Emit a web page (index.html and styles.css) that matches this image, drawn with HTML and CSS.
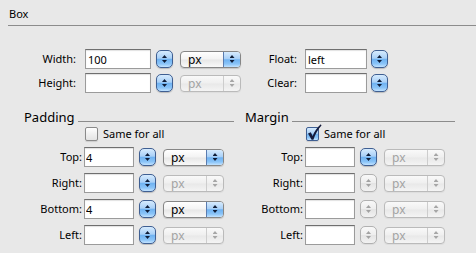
FILE: index.html
```html
<!DOCTYPE html>
<html lang="en">
<head>
    <meta charset="UTF-8">
    <meta name="viewport" content="width=device-width, initial-scale=1.0">
    <title>Box</title>
    <link rel="stylesheet" href="styles.css">
</head>
<body>
    <div class="panel-title">Box</div>
    <div class="rule"></div>

    <div class="box-grid">
        <div class="row">
            <label class="lbl lbl-main">Width:</label>
            <input class="field field-main" type="text" value="100">
            <span class="stepper"><span class="arrows"></span></span>
            <span class="popup"><span class="popup-text">px</span><span class="popup-btn"><span class="arrows"></span></span></span>
            <label class="lbl lbl-float">Float:</label>
            <input class="field field-float" type="text" value="left">
            <span class="stepper stepper-tight"><span class="arrows"></span></span>
        </div>
        <div class="row">
            <label class="lbl lbl-main">Height:</label>
            <input class="field field-main" type="text" value="">
            <span class="stepper"><span class="arrows"></span></span>
            <span class="popup disabled"><span class="popup-text">px</span><span class="popup-btn"><span class="arrows"></span></span></span>
            <label class="lbl lbl-float">Clear:</label>
            <input class="field field-float" type="text" value="">
            <span class="stepper stepper-tight"><span class="arrows"></span></span>
        </div>
    </div>

    <div class="sections">
        <div class="section">
            <div class="section-head">
                <span class="section-title">Padding</span>
                <span class="section-line"></span>
            </div>
            <div class="check-row">
                <span class="checkbox"></span>
                <span class="check-label">Same for all</span>
            </div>
            <div class="side-row">
                <label class="lbl lbl-side">Top:</label>
                <input class="field field-side" type="text" value="4">
                <span class="stepper"><span class="arrows"></span></span>
                <span class="popup"><span class="popup-text">px</span><span class="popup-btn"><span class="arrows"></span></span></span>
            </div>
            <div class="side-row">
                <label class="lbl lbl-side">Right:</label>
                <input class="field field-side" type="text" value="">
                <span class="stepper"><span class="arrows"></span></span>
                <span class="popup disabled"><span class="popup-text">px</span><span class="popup-btn"><span class="arrows"></span></span></span>
            </div>
            <div class="side-row">
                <label class="lbl lbl-side">Bottom:</label>
                <input class="field field-side" type="text" value="4">
                <span class="stepper"><span class="arrows"></span></span>
                <span class="popup"><span class="popup-text">px</span><span class="popup-btn"><span class="arrows"></span></span></span>
            </div>
            <div class="side-row">
                <label class="lbl lbl-side">Left:</label>
                <input class="field field-side" type="text" value="">
                <span class="stepper"><span class="arrows"></span></span>
                <span class="popup disabled"><span class="popup-text">px</span><span class="popup-btn"><span class="arrows"></span></span></span>
            </div>
        </div>

        <div class="section">
            <div class="section-head">
                <span class="section-title">Margin</span>
                <span class="section-line"></span>
            </div>
            <div class="check-row">
                <span class="checkbox checked">
                    <svg class="tick" width="16" height="17" viewBox="0 0 16 17">
                        <path d="M2 9.5 L4.8 8.2 L6.6 12 C8.6 7.2 11.2 3.2 14.8 0.3 L15.5 1.4 C12 5 9.2 10 7.4 15.8 L5.6 15.8 Z" fill="#141b3c"/>
                    </svg>
                </span>
                <span class="check-label">Same for all</span>
            </div>
            <div class="side-row">
                <label class="lbl lbl-side">Top:</label>
                <input class="field field-side" type="text" value="">
                <span class="stepper"><span class="arrows"></span></span>
                <span class="popup disabled"><span class="popup-text">px</span><span class="popup-btn"><span class="arrows"></span></span></span>
            </div>
            <div class="side-row">
                <label class="lbl lbl-side">Right:</label>
                <input class="field field-side" type="text" value="">
                <span class="stepper disabled"><span class="arrows"></span></span>
                <span class="popup disabled"><span class="popup-text">px</span><span class="popup-btn"><span class="arrows"></span></span></span>
            </div>
            <div class="side-row">
                <label class="lbl lbl-side">Bottom:</label>
                <input class="field field-side" type="text" value="">
                <span class="stepper disabled"><span class="arrows"></span></span>
                <span class="popup disabled"><span class="popup-text">px</span><span class="popup-btn"><span class="arrows"></span></span></span>
            </div>
            <div class="side-row">
                <label class="lbl lbl-side">Left:</label>
                <input class="field field-side" type="text" value="">
                <span class="stepper disabled"><span class="arrows"></span></span>
                <span class="popup disabled"><span class="popup-text">px</span><span class="popup-btn"><span class="arrows"></span></span></span>
            </div>
        </div>
    </div>
</body>
</html>
```

FILE: styles.css
```css
body {
    margin: 0;
    background-color: #e8e8e8;
    color: #000;
    font-family: 'Noto Sans', 'DejaVu Sans', sans-serif;
    font-size: 11px;
    overflow: hidden;
}

.panel-title {
    padding: 7px 0 0 9px;
    line-height: 14px;
}

.rule {
    margin: 4px 0 0 8px;
    border-top: 1px solid #8c8c8c;
}

/* top block: width / height / float / clear */
.box-grid {
    margin-top: 23px;
    display: flex;
    flex-direction: column;
    gap: 4px;
}

.row {
    display: flex;
    align-items: center;
    height: 20px;
}

.lbl {
    line-height: 20px;
    text-align: right;
    flex-shrink: 0;
}

.lbl-main {
    width: 68px;
    margin-left: 8px;
    margin-right: 9px;
}

.lbl-float {
    width: 56px;
    margin-right: 8px;
}

.field {
    box-sizing: border-box;
    height: 20px;
    margin: 0;
    padding: 0 2px;
    border: 1px solid #9b9b9b;
    border-top-color: #6f6f6f;
    box-shadow: inset 0 1px 1px rgba(0, 0, 0, 0.12);
    background-color: #fff;
    font-family: inherit;
    font-size: 11px;
    color: #000;
    outline: none;
    flex-shrink: 0;
}

.field-main {
    width: 66px;
}

.field-float {
    width: 62px;
}

.field-side {
    width: 50px;
    padding: 0 1px;
}

/* aqua stepper */
.stepper {
    box-sizing: border-box;
    width: 17px;
    height: 18px;
    margin-left: 5px;
    border: 1px solid #3f5f92;
    border-radius: 5px;
    background: linear-gradient(to bottom, #d6ebfe 0%, #a9d0f7 45%, #6fb2f1 52%, #8ac4f8 80%, #c3e3ff 100%);
    box-shadow: 0 1px 1px rgba(0, 0, 0, 0.2);
    color: #0f1d38;
    display: flex;
    align-items: center;
    justify-content: center;
    flex-shrink: 0;
}

.stepper-tight {
    margin-left: 4px;
}

.stepper.disabled {
    border-color: #b1b1b1;
    background: linear-gradient(to bottom, #f8f8f8 0%, #eeeeee 48%, #e4e4e4 52%, #f2f2f2 100%);
    box-shadow: 0 1px 1px rgba(0, 0, 0, 0.06);
    color: #a2a2a2;
}

.arrows {
    display: flex;
    flex-direction: column;
    align-items: center;
    gap: 2px;
}

.arrows::before,
.arrows::after {
    content: "";
    width: 5px;
    height: 3px;
    background-color: currentColor;
}

.arrows::before {
    clip-path: polygon(50% 0, 100% 100%, 0 100%);
}

.arrows::after {
    clip-path: polygon(0 0, 100% 0, 50% 100%);
}

/* popup button */
.popup {
    box-sizing: border-box;
    width: 61px;
    height: 17px;
    margin-left: 7px;
    border: 1px solid #868686;
    border-radius: 4px;
    background: linear-gradient(to bottom, #ffffff 0%, #f3f3f3 48%, #e7e7e7 52%, #f9f9f9 100%);
    box-shadow: 0 1px 1px rgba(0, 0, 0, 0.15);
    display: flex;
    overflow: hidden;
    flex-shrink: 0;
}

.popup-text {
    flex: 1;
    padding-left: 7px;
    line-height: 15px;
    font-size: 12px;
}

.popup-btn {
    width: 16px;
    border-left: 1px solid #5a7cb0;
    background: linear-gradient(to bottom, #d6ebfe 0%, #a9d0f7 45%, #6fb2f1 52%, #8ac4f8 80%, #c3e3ff 100%);
    color: #0f1d38;
    display: flex;
    align-items: center;
    justify-content: center;
}

.popup.disabled {
    border-color: #bababa;
    background: linear-gradient(to bottom, #f9f9f9 0%, #efefef 48%, #e8e8e8 52%, #f4f4f4 100%);
    box-shadow: 0 1px 1px rgba(0, 0, 0, 0.05);
}

.popup.disabled .popup-text {
    color: #a3a3a3;
}

.popup.disabled .popup-btn {
    background: transparent;
    border-left-color: #cdcdcd;
    color: #a6a6a6;
}

/* padding / margin sections */
.sections {
    margin-top: 16px;
    padding-left: 24px;
    display: flex;
    gap: 11px;
}

.section {
    width: 210px;
}

.section-head {
    display: flex;
    height: 16px;
}

.section-title {
    font-size: 13px;
    line-height: 16px;
    padding-right: 3px;
}

.section-line {
    flex: 1;
    margin-top: 12px;
    height: 0;
    border-top: 1px solid #8c8c8c;
}

.check-row {
    display: flex;
    align-items: center;
    height: 14px;
    margin-top: 2px;
    padding-left: 61px;
}

.checkbox {
    position: relative;
    box-sizing: border-box;
    width: 13px;
    height: 14px;
    border: 1px solid #8a8a8a;
    border-radius: 2px;
    background: linear-gradient(to bottom, #ffffff 0%, #f0f0f0 50%, #e4e4e4 100%);
    box-shadow: 0 1px 1px rgba(0, 0, 0, 0.12);
}

.checkbox.checked {
    border-color: #3f5f92;
    background: linear-gradient(to bottom, #d6ebfe 0%, #a9d0f7 45%, #6fb2f1 52%, #8ac4f8 80%, #c3e3ff 100%);
}

.tick {
    position: absolute;
    left: -1px;
    top: -4px;
}

.check-label {
    margin-left: 5px;
    line-height: 14px;
}

.side-row {
    display: flex;
    align-items: center;
    height: 20px;
    margin-top: 6px;
}

.lbl-side {
    width: 58px;
    margin-right: 2px;
}
```
